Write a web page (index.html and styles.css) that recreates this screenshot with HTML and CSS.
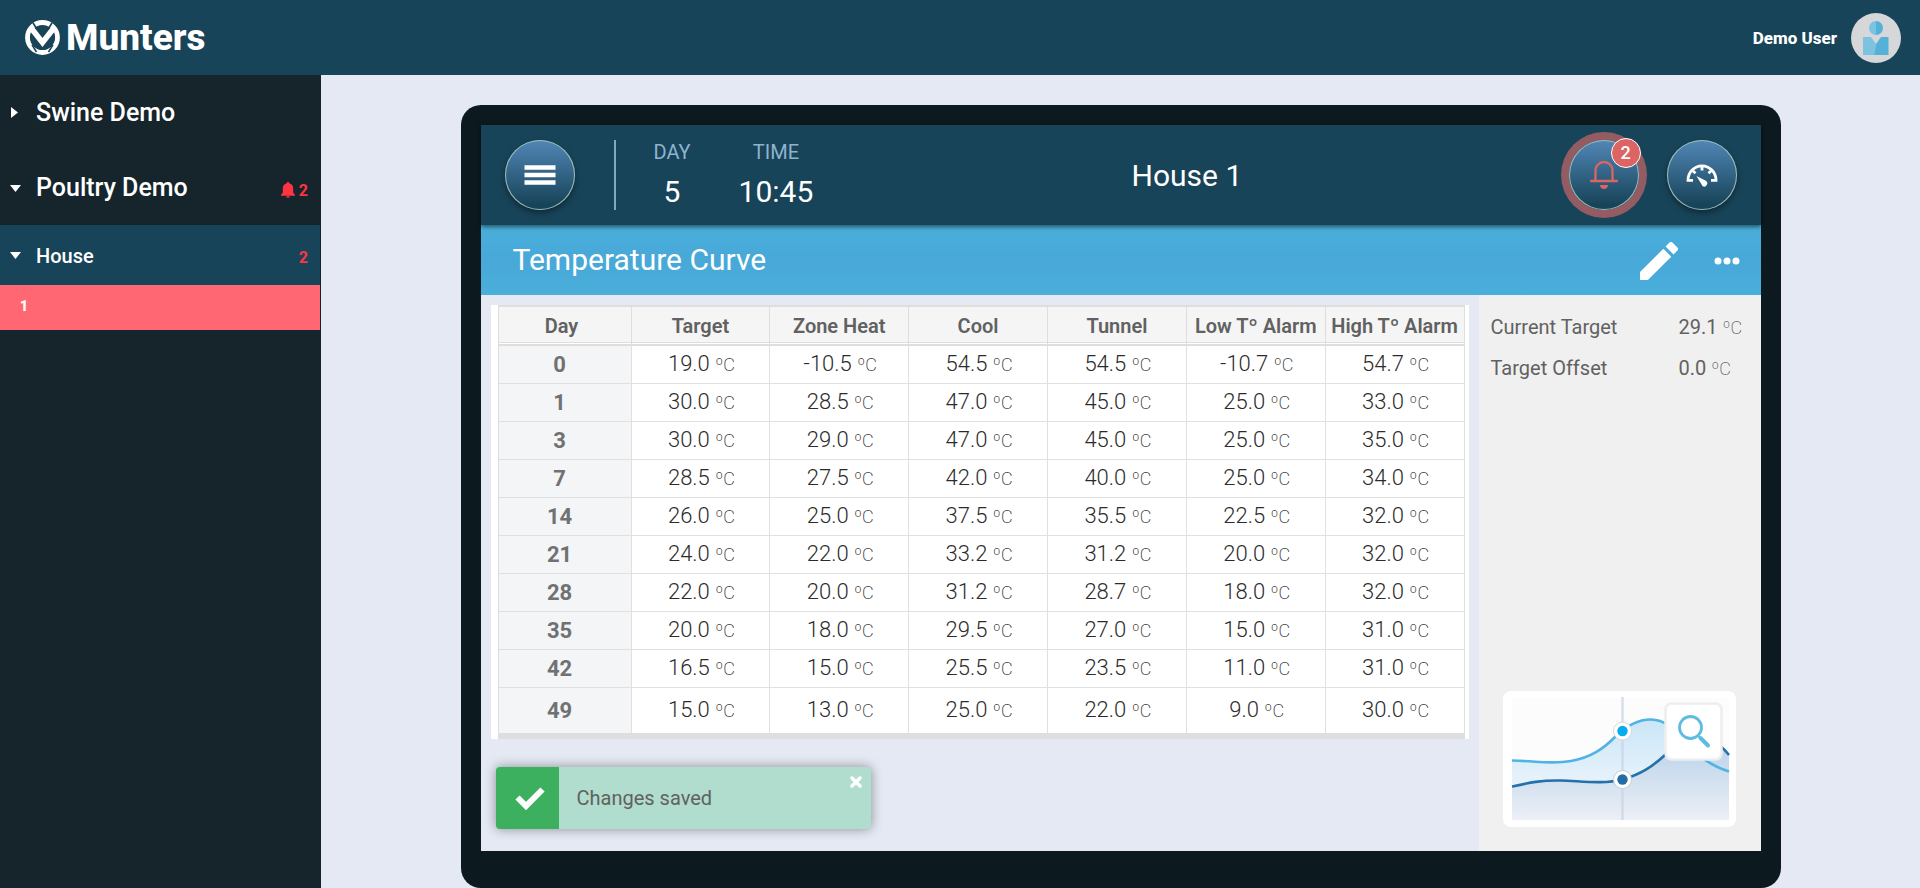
FILE: index.html
```html
<!DOCTYPE html>
<html lang="en">
<head>
<meta charset="utf-8">
<title>House 1 - Temperature Curve</title>
<link rel="stylesheet" href="styles.css">
</head>
<body>
<header class="topbar">
  <a class="brand" href="#">
    <svg class="brand-mark" viewBox="0 0 35 35" aria-hidden="true">
      <circle cx="17.500" cy="17.500" r="15" fill="none" stroke="#fff" stroke-width="4.800"/>
      <path d="M6.500 8.500L17.500 22.500 28.500 8.500" fill="none" stroke="#fff" stroke-width="5.600"/>
      <path d="M7 24.800L11.500 32M28 24.800L23.500 32M7.800 2.500L11.800 9M27.200 2.500L23.200 9" stroke="#184459" stroke-width="1.600"/>
    </svg>
    <span class="brand-name">Munters</span>
  </a>
  <div class="user">
    <span class="user-name">Demo User</span>
    <svg class="avatar" viewBox="0 0 50 50" role="img" aria-label="Avatar">
      <circle cx="25" cy="25" r="25" fill="#d5d7d9"/>
      <path d="M25 8a7 7 0 0 0 0 14Z" fill="#7cc3e1"/>
      <path d="M25 8a7 7 0 0 1 0 14Z" fill="#56b1d9"/>
      <path d="M12 24h8l5 7-2 11H12Z" fill="#7cc3e1"/>
      <path d="M37.500 24H30l-5 7-2 11h14.500Z" fill="#56b1d9"/>
    </svg>
  </div>
</header>
<div class="layout">
  <nav class="sidebar">
    <button class="node" type="button"><span class="caret"><svg viewBox="0 0 12 12"><path d="M1 0l7 5.500L1 11Z" fill="#fff"/></svg></span><span class="node-label">Swine Demo</span></button>
    <button class="node" type="button"><span class="caret"><svg viewBox="0 0 12 12"><path d="M0 3h11L5.500 10Z" fill="#fff"/></svg></span><span class="node-label">Poultry Demo</span>
      <svg class="bell-small" viewBox="0 0 14 16" aria-hidden="true"><path d="M7 0c.8 0 1.200.5 1.200 1.200C10.800 1.800 12.200 3.800 12.200 6.500v4l1.800 2.300v.9H0v-.9l1.800-2.300v-4C1.800 3.800 3.200 1.800 5.800 1.200 5.800.5 6.200 0 7 0ZM5.200 14.200h3.600a1.800 1.500 0 0 1-3.600 0Z" fill="#ff3443"/></svg>
      <span class="count">2</span></button>
    <button class="node node-group" type="button"><span class="caret"><svg viewBox="0 0 12 12"><path d="M0 3h11L5.500 10Z" fill="#fff"/></svg></span><span class="node-label">House</span><span class="count">2</span></button>
    <a class="node-house" href="#">1</a>
  </nav>
  <main class="main">
    <div class="device">
      <div class="screen">
        <header class="status">
          <button class="round" type="button" aria-label="Menu">
            <svg viewBox="0 0 70 70"><path d="M19.500 27.500h31M19.500 35h31M19.500 42.500h31" stroke="#fff" stroke-width="4.500"/></svg>
          </button>
          <dl class="clock">
            <div class="clock-day"><dt>DAY</dt><dd>5</dd></div>
            <div><dt>TIME</dt><dd>10:45</dd></div>
          </dl>
          <h1 class="house-title">House 1</h1>
          <div class="status-actions">
            <button class="round round-alarm" type="button" aria-label="Alarms">
              <svg viewBox="0 0 70 70"><path d="M22 41h26M24 41c2 0 2.500-1 2.500-3v-7.500a8.500 8.500 0 0 1 17 0V38c0 2 .5 3 2.500 3" fill="none" stroke="#dc6563" stroke-width="2.300" stroke-linecap="round"/><path d="M31 45h8c0 2.500-2 4-4 4s-4-1.500-4-4Z" fill="#dc6563"/></svg>
              <span class="badge">2</span>
            </button>
            <button class="round" type="button" aria-label="Dashboard">
              <svg viewBox="0 0 70 70"><path d="M26 40.300h-5A14 14.500 0 0 1 49 40.300h-5M35 26v4.500M25.500 30.500l3 2.700M44.500 30.500l-3 2.700" fill="none" stroke="#fff" stroke-width="2.800"/><path d="M29.500 36l9.300 4.800a3 3 0 0 1-3.300 5.200Z" fill="#fff"/></svg>
            </button>
          </div>
        </header>
        <div class="titlebar">
          <h2>Temperature Curve</h2>
          <button class="icon-btn" type="button" aria-label="Edit"><svg class="pencil" viewBox="3 3 18 18"><path fill="#fff" d="M3 17.250V21h3.750L17.810 9.940l-3.750-3.750L3 17.250zM20.710 7.040a1 1 0 0 0 0-1.410l-2.340-2.340a1 1 0 0 0-1.410 0l-1.830 1.830 3.750 3.750 1.830-1.830z"/></svg></button>
          <button class="icon-btn" type="button" aria-label="More"><svg class="dots" viewBox="0 0 26 8"><g fill="#fff"><circle cx="4" cy="4" r="3.500"/><circle cx="13" cy="4" r="3.500"/><circle cx="22" cy="4" r="3.500"/></g></svg></button>
        </div>
        <div class="content">
          <section class="curve">
            <div class="table-wrap">
              <table>
                <thead><tr><th>Day</th><th>Target</th><th>Zone Heat</th><th>Cool</th><th>Tunnel</th><th>Low Tº Alarm</th><th>High Tº Alarm</th></tr></thead>
                <tbody>
                  <tr><th>0</th><td>19.0 <small>ºC</small></td><td>-10.5 <small>ºC</small></td><td>54.5 <small>ºC</small></td><td>54.5 <small>ºC</small></td><td>-10.7 <small>ºC</small></td><td>54.7 <small>ºC</small></td></tr>
                  <tr><th>1</th><td>30.0 <small>ºC</small></td><td>28.5 <small>ºC</small></td><td>47.0 <small>ºC</small></td><td>45.0 <small>ºC</small></td><td>25.0 <small>ºC</small></td><td>33.0 <small>ºC</small></td></tr>
                  <tr><th>3</th><td>30.0 <small>ºC</small></td><td>29.0 <small>ºC</small></td><td>47.0 <small>ºC</small></td><td>45.0 <small>ºC</small></td><td>25.0 <small>ºC</small></td><td>35.0 <small>ºC</small></td></tr>
                  <tr><th>7</th><td>28.5 <small>ºC</small></td><td>27.5 <small>ºC</small></td><td>42.0 <small>ºC</small></td><td>40.0 <small>ºC</small></td><td>25.0 <small>ºC</small></td><td>34.0 <small>ºC</small></td></tr>
                  <tr><th>14</th><td>26.0 <small>ºC</small></td><td>25.0 <small>ºC</small></td><td>37.5 <small>ºC</small></td><td>35.5 <small>ºC</small></td><td>22.5 <small>ºC</small></td><td>32.0 <small>ºC</small></td></tr>
                  <tr><th>21</th><td>24.0 <small>ºC</small></td><td>22.0 <small>ºC</small></td><td>33.2 <small>ºC</small></td><td>31.2 <small>ºC</small></td><td>20.0 <small>ºC</small></td><td>32.0 <small>ºC</small></td></tr>
                  <tr><th>28</th><td>22.0 <small>ºC</small></td><td>20.0 <small>ºC</small></td><td>31.2 <small>ºC</small></td><td>28.7 <small>ºC</small></td><td>18.0 <small>ºC</small></td><td>32.0 <small>ºC</small></td></tr>
                  <tr><th>35</th><td>20.0 <small>ºC</small></td><td>18.0 <small>ºC</small></td><td>29.5 <small>ºC</small></td><td>27.0 <small>ºC</small></td><td>15.0 <small>ºC</small></td><td>31.0 <small>ºC</small></td></tr>
                  <tr><th>42</th><td>16.5 <small>ºC</small></td><td>15.0 <small>ºC</small></td><td>25.5 <small>ºC</small></td><td>23.5 <small>ºC</small></td><td>11.0 <small>ºC</small></td><td>31.0 <small>ºC</small></td></tr>
                  <tr><th>49</th><td>15.0 <small>ºC</small></td><td>13.0 <small>ºC</small></td><td>25.0 <small>ºC</small></td><td>22.0 <small>ºC</small></td><td>9.0 <small>ºC</small></td><td>30.0 <small>ºC</small></td></tr>
                </tbody>
              </table>
            </div>
            <div class="toast" role="status">
              <div class="toast-icon"><svg viewBox="0 0 30 23"><path d="M2.500 10.500l8.500 8.500L27.500 2.500" fill="none" stroke="#fff" stroke-width="6"/></svg></div>
              <p class="toast-text">Changes saved</p>
              <button class="toast-close" type="button" aria-label="Close"><svg viewBox="0 0 12 12"><path d="M2 2l8 8M10 2l-8 8" stroke="#fff" stroke-width="3.400" stroke-linecap="round"/></svg></button>
            </div>
          </section>
          <aside class="info">
            <dl class="facts">
              <dt>Current Target</dt><dd>29.1 <small>ºC</small></dd>
              <dt>Target Offset</dt><dd>0.0 <small>ºC</small></dd>
            </dl>
            <button class="chart-btn" type="button" aria-label="View chart">
              <svg viewBox="0 0 233 136">
                <defs>
                  <linearGradient id="light" x1="0" y1="0" x2="0" y2="1"><stop offset="0" stop-color="#cbe6f7"/><stop offset="1" stop-color="#f7fafd"/></linearGradient>
                  <linearGradient id="dark" x1="0" y1="0" x2="0" y2="1"><stop offset="0" stop-color="#b5d0e8"/><stop offset="1" stop-color="#eceff6"/></linearGradient>
                </defs>
                <rect x="9" y="7" width="217" height="122" fill="#fcfcfc"/>
                <path d="M9 69.500C35 70 48 73.500 68 70S100 58 112 46 136 28.500 148 28.500C177 29 180 66 226 80.500V129H9Z" fill="url(#light)"/>
                <path d="M9 95.500C25 92 38 89 58 89.500S100 93.500 120 88.500C138 83 149 76 162 64 185 40 205 38 226 64V129H9Z" fill="url(#dark)"/>
                <path d="M119.500 6v123" stroke="#c9d3e4" stroke-opacity=".7" stroke-width="2.500"/>
                <path d="M9 95.500C25 92 38 89 58 89.500S100 93.500 120 88.500C138 83 149 76 162 64 185 40 205 38 226 64" fill="none" stroke="#2470ab" stroke-width="2.600"/>
                <path d="M9 69.500C35 70 48 73.500 68 70S100 58 112 46 136 28.500 148 28.500C177 29 180 66 226 80.500" fill="none" stroke="#4fb3e5" stroke-width="2.600"/>
                <circle cx="119.500" cy="40" r="9" fill="#fff" stroke="#d6d9dd"/><circle cx="119.500" cy="40" r="5.200" fill="#05adee"/>
                <circle cx="119.500" cy="88.500" r="9" fill="#fff" stroke="#c9cfd6"/><circle cx="119.500" cy="88.500" r="5.200" fill="#236ca6"/>
                <rect x="162.500" y="12.500" width="56" height="56" rx="6" fill="#fff" stroke="#eeeeef" stroke-width="2.500"/>
                <circle cx="187.500" cy="36.500" r="11" fill="none" stroke="#5fbbe1" stroke-width="2.800"/>
                <path d="M195 44.500l2 2" stroke="#5fbbe1" stroke-width="2"/><path d="M197.500 47l7.500 7.500" stroke="#5fbbe1" stroke-width="4" stroke-linecap="round"/>
              </svg>
            </button>
          </aside>
        </div>
      </div>
    </div>
  </main>
</div>
</body>
</html>
```

FILE: styles.css
```css
* { box-sizing: border-box; }

body {
  margin: 0;
  min-height: 100vh;
  display: flex;
  flex-direction: column;
  background: #e5e9f3;
  color: #fff;
  font-family: Roboto, "Liberation Sans", sans-serif;
}

button {
  padding: 0;
  border: 0;
  background: none;
  color: inherit;
  font: inherit;
  cursor: pointer;
}

a { color: inherit; text-decoration: none; }
h1, h2, p, dl, dd { margin: 0; font-weight: 400; }
svg { display: block; }

/* Top bar */
.topbar {
  display: flex;
  justify-content: space-between;
  align-items: center;
  height: 75px;
  padding: 0 19px 0 25px;
  background: #184459;
}
.brand { display: flex; align-items: center; gap: 6px; }
.brand-mark { width: 35px; height: 35px; }
.brand-name { font-size: 37px; line-height: 44px; font-weight: 800; }
.user { display: flex; align-items: center; gap: 14px; }
.user-name { font-size: 17px; font-weight: 800; }
.avatar { width: 50px; height: 50px; }

/* Sidebar */
.layout { flex: 1; display: flex; }
.sidebar {
  flex: none;
  width: 321px;
  border-right: 1px solid #15252b;
  background: #15252b;
}
.node {
  display: flex;
  align-items: center;
  width: 100%;
  height: 75px;
  padding: 0 12px 0 10px;
  font-size: 25px;
  font-weight: 500;
  text-align: left;
}
.caret { width: 26px; }
.caret svg { width: 12px; height: 12px; }
.node-label { flex: 1; }
.bell-small { width: 14px; height: 16px; margin: 4px 4px 0 0; }
.count { padding-top: 6px; color: #ff3443; font-size: 16px; line-height: 16px; font-weight: 700; }
.node-group { height: 60px; background: #184459; font-size: 20px; }
.node-group .node-label { padding-top: 2px; }
.node-house {
  display: flex;
  align-items: center;
  height: 45px;
  padding: 0 20px 4px;
  background: #ff6873;
  font-size: 14px;
  font-weight: 900;
}

/* Controller frame */
.main { flex: 1; padding-top: 30px; }
.device {
  max-width: 1320px;
  margin: 0 auto;
  padding: 20px 20px 37px;
  border-radius: 20px;
  background: #0c191e;
}
.screen { background: #e5e9f3; }
.status {
  position: relative;
  display: flex;
  align-items: center;
  height: 100px;
  padding: 0 24px;
  background: #184459;
  box-shadow: 0 2px 4px rgba(0, 0, 0, .5);
}
.round {
  position: relative;
  flex: none;
  width: 70px;
  height: 70px;
  border-radius: 50%;
  background: linear-gradient(#5187b7, #184459 92%);
  box-shadow: inset 0 0 0 1px #9cbdb9, 0 3px 6px rgba(0, 0, 0, .4);
}
.round-alarm { box-shadow: inset 0 0 0 1px #9cbdb9, 0 0 0 8px #935b62; }
.badge {
  position: absolute;
  top: -2px;
  right: -2px;
  width: 30px;
  height: 30px;
  border: 1px solid #fff;
  border-radius: 50%;
  background: #dc6563;
  font-size: 18px;
  line-height: 28px;
  font-weight: 500;
}
.clock {
  display: flex;
  gap: 48px;
  margin-left: 39px;
  padding-left: 38px;
  border-left: 2px solid #84a8c4;
  text-align: center;
}
.clock dt { color: #8fb3cf; font-size: 20px; line-height: 24px; }
.clock dd { padding-top: 10px; font-size: 30px; line-height: 36px; }
.house-title { flex: 1; padding-right: 8px; font-size: 30px; text-align: center; }
.status-actions { display: flex; gap: 28px; }

.titlebar {
  display: flex;
  align-items: center;
  gap: 36px;
  height: 70px;
  padding: 0 21px 0 32px;
  background: linear-gradient(#4aafdb, #48a8d8 50%, #4aafdb);
}
.titlebar h2 { flex: 1; font-size: 30px; line-height: 36px; }
.icon-btn { padding-top: 2px; }
.pencil { width: 38px; height: 38px; }
.dots { width: 26px; height: 8px; }

/* Curve table */
.content { display: flex; }
.curve { flex: 1; padding: 10px 10px 22px; }
.table-wrap { padding: 0 4px 0 7px; background: #fff; }
table {
  width: 100%;
  table-layout: fixed;
  border-spacing: 0;
  border-left: 1px solid #dedede;
  text-align: center;
}
thead th {
  height: 41px;
  padding: 0;
  border-top: 2px solid #dedede;
  border-right: 1px solid #dedede;
  border-bottom: 2px solid #dedede;
  background: #f5f5f5;
  box-shadow: inset 0 -1px #fff, inset 0 -2px #dedede;
  color: #616161;
  font-size: 20px;
  line-height: 24px;
  font-weight: 600;
  white-space: nowrap;
}
thead th:first-child { width: 133px; padding-right: 6px; }
tbody th, tbody td {
  height: 38px;
  padding: 0;
  border-right: 1px solid #e0e0e0;
  border-bottom: 1px solid #e0e0e0;
  font-size: 22px;
  line-height: 28px;
}
tbody th { padding-right: 10px; background: #f4f5f7; color: #717171; font-weight: 700; }
tbody td { padding-left: 2px; color: #2b2b2b; font-weight: 300; }
tbody tr:last-child > * { height: 51px; border-bottom: 6px solid #dedede; }
small { font-size: 18px; font-weight: 200; }

/* Notification */
.toast {
  display: flex;
  max-width: 375px;
  height: 62px;
  margin: 28px 0 0 5px;
  border-radius: 4px;
  overflow: hidden;
  background: #b0ddcd;
  box-shadow: 0 0 12px rgba(0, 0, 0, .4);
}
.toast-icon { display: grid; place-items: center; width: 63px; padding-left: 5px; background: #3db05f; }
.toast-icon svg { width: 30px; height: 23px; }
.toast-text { flex: 1; padding-left: 18px; color: #616161; font-size: 20px; line-height: 62px; }
.toast-close { align-self: flex-start; padding: 9px; }
.toast-close svg { width: 12px; height: 12px; }

/* Info panel */
.info {
  display: flex;
  flex-direction: column;
  justify-content: space-between;
  width: 282px;
  padding: 12px 12px 24px;
  background: #f0f0f0;
}
.facts {
  display: grid;
  grid-template-columns: 1fr 70px;
  color: #616161;
  font-size: 20px;
  line-height: 40px;
  white-space: nowrap;
}
.chart-btn { margin: 0 13px 0 12px; border-radius: 8px; background: #fff; }
.chart-btn svg { width: 100%; }
```
